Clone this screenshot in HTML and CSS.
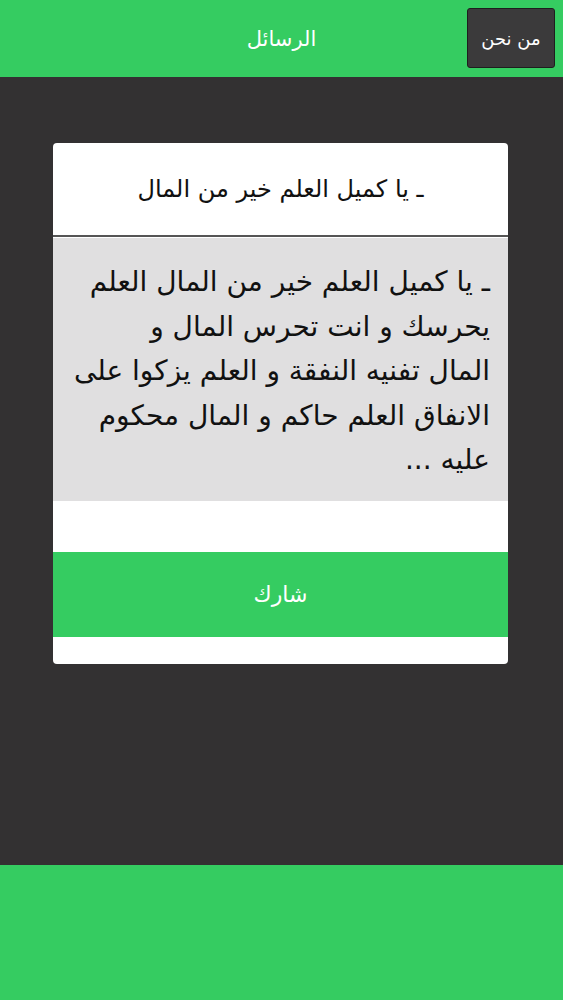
FILE: index.html
```html
<!DOCTYPE html>
<html lang="ar" dir="rtl">

<head>
  <meta charset="utf-8" />
  <meta name="viewport" content="width=device-width, initial-scale=1.0">
  <title>الرسائل</title>
  <link rel="stylesheet" href="styles.css">
</head>

<body>
  <div class="header-bar">
    <a class="about-button" href="#">من نحن</a>
    <div class="header-title">الرسائل</div>
  </div>
  <div class="main-area">
    <div class="msg-card">
      <div class="msg-title">ـ يا كميل العلم خير من المال</div>
      <div class="msg-body">ـ يا كميل العلم خير من المال العلم<br>
        يحرسك و انت تحرس المال و<br>
        المال تفنيه النفقة و العلم يزكوا على<br>
        الانفاق العلم حاكم و المال محكوم<br>
        عليه ...</div>
      <div class="msg-gap"></div>
      <a class="share-button" href="#">شارك</a>
      <div class="msg-bottom"></div>
    </div>
  </div>
  <div class="footer-bar"></div>
</body>

</html>
```

FILE: styles.css
```css
html,
body {
  height: 100%;
}

body {
  padding: 0;
  margin: 0;
  display: flex;
  flex-direction: column;
  background-color: #333132;
  font-family: "DejaVu Sans", "Liberation Sans", sans-serif;
}

div.header-bar {
  position: relative;
  display: flex;
  align-items: center;
  justify-content: center;
  height: 77px;
  flex-shrink: 0;
  background-color: #35cc61;
}

.header-title {
  color: #ffffff;
  font-size: 21px;
}

.about-button {
  position: absolute;
  top: 8px;
  right: 8px;
  width: 86px;
  height: 58px;
  display: flex;
  align-items: center;
  justify-content: center;
  background-color: #3b3a3b;
  border: 1px solid #1e1e1e;
  border-radius: 3px;
  color: #ffffff;
  font-size: 18px;
  text-decoration: none;
}

.main-area {
  flex: 1;
  padding: 66px 55px 0 53px;
}

.msg-card {
  background-color: #ffffff;
  border-radius: 4px;
  overflow: hidden;
}

.msg-title {
  height: 92px;
  display: flex;
  align-items: center;
  justify-content: center;
  font-size: 24px;
  color: #111111;
  border-bottom: 2px solid #555555;
}

.msg-body {
  margin-top: 1px;
  background-color: #e0dfe0;
  padding: 22px 18px 18px 8px;
  font-size: 28px;
  line-height: 44.5px;
  color: #111111;
  text-align: right;
  white-space: nowrap;
}

.msg-gap {
  height: 51px;
}

.share-button {
  display: flex;
  align-items: center;
  justify-content: center;
  height: 85px;
  background-color: #35cc61;
  color: #ffffff;
  font-size: 22px;
  text-decoration: none;
}

.msg-bottom {
  height: 27px;
}

.footer-bar {
  height: 135px;
  flex-shrink: 0;
  background-color: #35cc61;
}
```
